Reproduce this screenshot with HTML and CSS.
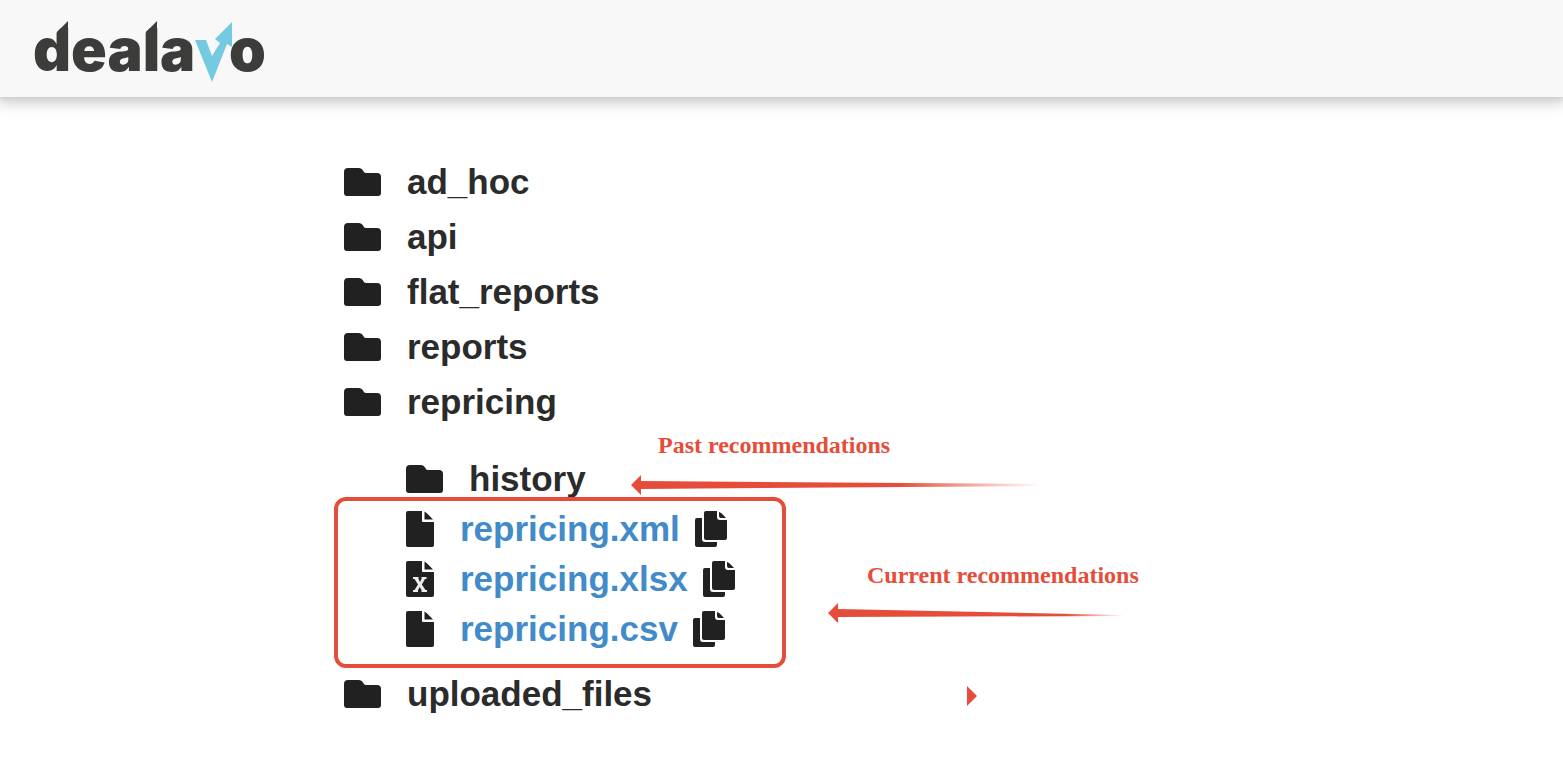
FILE: index.html
```html
<!DOCTYPE html>
<html lang="en">
<head>
<meta charset="utf-8">
<meta name="viewport" content="width=device-width, initial-scale=1">
<title>Dealavo files</title>
<link rel="stylesheet" href="styles.css">
</head>
<body>
<svg class="symbols" aria-hidden="true">
  <symbol id="folder" viewBox="0 0 37 28"><path d="M4 0H15Q18 0 19 2.500Q20 5 22 5H33Q37 5 37 9V25Q37 28 34 28H3Q0 28 0 25V4Q0 0 4 0Z"/></symbol>
  <symbol id="file" viewBox="0 0 28 36"><path d="M2 0H16V10Q16 11 17 11H28V34Q28 36 26 36H2Q0 36 0 34V2Q0 0 2 0ZM18.500 0.500Q20 1 27 8.500H18.500Z"/></symbol>
  <symbol id="sheet" viewBox="0 0 28 36"><use href="#file"/><path class="mark" d="M7 16H12.500V18L14 21L15.500 18V16H20.500V18H19L15.800 23.500L19.500 29H21V31H15.500V29L13.800 26L12 29V31H7V29H8.500L12 23.500L8.500 18H7Z"/></symbol>
  <symbol id="copy" viewBox="0 0 32 36"><path d="M2 7H7V28Q7 31 10 31H22V34Q22 36 20 36H2Q0 36 0 34V9Q0 7 2 7Z"/><path d="M11 0H22V6Q22 9 25 9H32V27Q32 29 30 29H11Q9 29 9 27V2Q9 0 11 0ZM24 1Q26 1 31 7H26Q24 7 24 5Z"/></symbol>
</svg>

<header class="topbar">
  <a class="brand" href="#" aria-label="dealavo">
    <svg class="logo" viewBox="0 0 234 64">
      <text class="word" x="-1" y="51">deala</text>
      <text class="word" x="195" y="51">o</text>
      <path class="notch" d="M21 6H29L22 13ZM110 6H118L111 13Z"/>
      <path class="tip" d="M23 12L34 1V14H23ZM112 12L123 1V14H112Z"/>
      <path class="tick" d="M161 20H172L178 36L186 23L181 19L198 2V27L193 24L178 62Z"/>
    </svg>
  </a>
</header>

<main class="browser">
  <ul class="tree">
    <li class="row"><svg class="folder"><use href="#folder"/></svg><span>ad_hoc</span></li>
    <li class="row"><svg class="folder"><use href="#folder"/></svg><span>api</span></li>
    <li class="row"><svg class="folder"><use href="#folder"/></svg><span>flat_reports</span></li>
    <li class="row"><svg class="folder"><use href="#folder"/></svg><span>reports</span></li>
    <li>
      <div class="row"><svg class="folder"><use href="#folder"/></svg><span>repricing</span></div>
      <ul class="nested">
        <li class="row compact"><svg class="folder"><use href="#folder"/></svg><span>history</span>
          <div class="note past">
            <p class="label">Past recommendations</p>
            <svg class="arrow" viewBox="0 0 410 20"><defs><linearGradient id="fade"><stop offset="0.65" stop-color="#e54d3a"/><stop offset="1" stop-color="#e54d3a" stop-opacity="0"/></linearGradient></defs><path fill="url(#fade)" d="M0 10L10 0V6L410 9V11L10 14V20Z"/></svg>
          </div>
        </li>
        <li>
          <ul class="files">
            <li class="row compact"><svg class="file"><use href="#file"/></svg><a href="#">repricing.xml</a><button class="copy" aria-label="Copy repricing.xml link"><svg><use href="#copy"/></svg></button></li>
            <li class="row compact"><svg class="file"><use href="#sheet"/></svg><a href="#">repricing.xlsx</a><button class="copy" aria-label="Copy repricing.xlsx link"><svg><use href="#copy"/></svg></button></li>
            <li class="row compact"><svg class="file"><use href="#file"/></svg><a href="#">repricing.csv</a><button class="copy" aria-label="Copy repricing.csv link"><svg><use href="#copy"/></svg></button></li>
          </ul>
          <div class="note current">
            <p class="label">Current recommendations</p>
            <svg class="arrow" viewBox="0 0 296 20"><defs><linearGradient id="fade2"><stop offset="0.8" stop-color="#e54d3a"/><stop offset="1" stop-color="#e54d3a" stop-opacity="0"/></linearGradient></defs><path fill="url(#fade2)" d="M0 10L10 0V6L296 12V13L10 14V20Z"/></svg>
          </div>
        </li>
      </ul>
    </li>
    <li class="row"><svg class="folder"><use href="#folder"/></svg><span>uploaded_files</span>
      <svg class="pointer" viewBox="0 0 10 20"><path d="M0 0L10 10L0 20Z"/></svg>
    </li>
  </ul>
</main>
</body>
</html>
```
FILE: styles.css
```css
*, *::before { box-sizing: border-box; }

body {
  margin: 0;
  background: #fff;
  color: #2b2b2b;
  font: bold 35px/50px "Liberation Sans", Arial, sans-serif;
}

.symbols { position: absolute; width: 0; height: 0; }
svg { display: block; flex: none; fill: #212121; }
.mark { fill: #eee; }

.topbar {
  display: flex;
  padding: 20px 34px 13px;
  background: #f8f8f8;
  box-shadow: 0 2px 4px #d0d0d0, 0 4px 14px 2px rgba(0, 0, 0, 0.2);
}

.brand { display: block; }
.logo { width: 234px; height: 64px; overflow: visible; }
.word { font: 900 59px Inter, sans-serif; }
.word, .tip { fill: #3c3c3b; }
.notch { fill: #f8f8f8; }
.tick { fill: #74cae1; }

.browser { padding: 57px 24px 36px 344px; }

.tree, .nested, .files { margin: 0; padding: 0; list-style: none; }
.nested { margin: 25px 0 12px; padding-left: 62px; }
.nested > li, .tree > .row { position: relative; }

.row { display: flex; align-items: center; height: 55px; }
.compact { height: 50px; }

.folder { width: 37px; height: 28px; margin-right: 26px; }
.file { width: 28px; height: 36px; margin-right: 26px; }

a { color: #428bca; text-decoration: none; }

.copy { margin: 0 0 0 15px; padding: 0; border: 0; background: none; cursor: pointer; }
.copy svg { width: 32px; height: 36px; }

/* Highlight frame around the current files */
.files::before {
  content: "";
  position: absolute;
  top: -7px;
  left: -72px;
  width: 452px;
  height: 171px;
  border: 4px solid #e54d3a;
  border-radius: 12px;
  pointer-events: none;
}

.note { position: absolute; }
.past { top: -23px; left: 225px; }
.current { top: 57px; left: 422px; }
.label {
  margin: 0;
  color: #e54d3a;
  font: bold 24px/28px "Liberation Serif", "Times New Roman", serif;
  white-space: nowrap;
}
.past .label { padding-left: 27px; }
.current .label { padding-left: 39px; }
.arrow { height: 20px; }
.past .arrow { width: 410px; margin-top: 16px; }
.current .arrow { width: 296px; margin-top: 14px; }
.pointer { position: absolute; top: 20px; left: 623px; width: 10px; height: 20px; fill: #e54d3a; }
```
